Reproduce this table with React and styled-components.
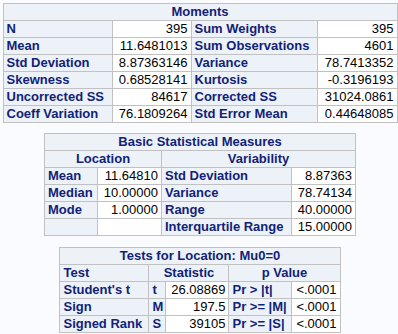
import { createGlobalStyle, styled } from "styled-components";

const GlobalStyle = createGlobalStyle`
  html, body {
    margin: 0;
    padding: 0;
    background: #fafbfe;
  }
  body {
    font-family: "Liberation Sans", Arial, sans-serif;
    font-size: 13px;
  }
`;

const Page = styled.div`
  width: 398px;
  box-sizing: border-box;
  padding: 3px 0 0 2px;
  display: flex;
  flex-direction: column;
  align-items: center;
`;

const Table = styled.table`
  border-collapse: collapse;
  table-layout: fixed;
  margin-bottom: ${(p) => p.$gap || 0}px;
  td, th {
    font-family: "Liberation Sans", Arial, sans-serif;
    font-size: 13px;
    line-height: 14px;
    border: 1px solid #c1c1c1;
    padding: 1px 3px;
    white-space: nowrap;
    overflow: hidden;
  }
`;

const Head = styled.th`
  background: #edf2f9;
  color: #112277;
  font-weight: bold;
  text-align: ${(p) => p.$align || "left"};
`;

const Cell = styled.td`
  background: #fff;
  color: #000;
  text-align: right;
`;

const moments = [
  ["N", "395", "Sum Weights", "395"],
  ["Mean", "11.6481013", "Sum Observations", "4601"],
  ["Std Deviation", "8.87363146", "Variance", "78.7413352"],
  ["Skewness", "0.68528141", "Kurtosis", "-0.3196193"],
  ["Uncorrected SS", "84617", "Corrected SS", "31024.0861"],
  ["Coeff Variation", "76.1809264", "Std Error Mean", "0.44648085"],
];

const basic = [
  ["Mean", "11.64810", "Std Deviation", "8.87363"],
  ["Median", "10.00000", "Variance", "78.74134"],
  ["Mode", "1.00000", "Range", "40.00000"],
  ["", "", "Interquartile Range", "15.00000"],
];

const tests = [
  ["Student's t", "t", "26.08869", "Pr > |t|", "<.0001"],
  ["Sign", "M", "197.5", "Pr >= |M|", "<.0001"],
  ["Signed Rank", "S", "39105", "Pr >= |S|", "<.0001"],
];

function Cols({ widths }) {
  return (
    <colgroup>
      {widths.map((w, i) => (
        <col key={i} style={{ width: w }} />
      ))}
    </colgroup>
  );
}

export default function App() {
  return (
    <Page>
      <GlobalStyle />
      <Table $gap={10} style={{ width: 394 }}>
        <Cols widths={[109, 79, 126, 80]} />
        <thead>
          <tr>
            <Head colSpan={4} $align="center">Moments</Head>
          </tr>
        </thead>
        <tbody>
          {moments.map((r) => (
            <tr key={r[0]}>
              <Head>{r[0]}</Head>
              <Cell>{r[1]}</Cell>
              <Head>{r[2]}</Head>
              <Cell>{r[3]}</Cell>
            </tr>
          ))}
        </tbody>
      </Table>

      <Table $gap={11} style={{ width: 311 }}>
        <Cols widths={[53, 64, 130, 64]} />
        <thead>
          <tr>
            <Head colSpan={4} $align="center">Basic Statistical Measures</Head>
          </tr>
          <tr>
            <Head colSpan={2} $align="center">Location</Head>
            <Head colSpan={2} $align="center">Variability</Head>
          </tr>
        </thead>
        <tbody>
          {basic.map((r) => (
            <tr key={r[2]}>
              <Head>{r[0]}</Head>
              <Cell>{r[1]}</Cell>
              <Head>{r[2]}</Head>
              <Cell>{r[3]}</Cell>
            </tr>
          ))}
        </tbody>
      </Table>

      <Table style={{ width: 280 }}>
        <Cols widths={[89, 17, 63, 63, 48]} />
        <thead>
          <tr>
            <Head colSpan={5} $align="center">Tests for Location: Mu0=0</Head>
          </tr>
          <tr>
            <Head>Test</Head>
            <Head colSpan={2} $align="center">Statistic</Head>
            <Head colSpan={2} $align="center">p Value</Head>
          </tr>
        </thead>
        <tbody>
          {tests.map((r) => (
            <tr key={r[0]}>
              <Head>{r[0]}</Head>
              <Head>{r[1]}</Head>
              <Cell>{r[2]}</Cell>
              <Head>{r[3]}</Head>
              <Cell>{r[4]}</Cell>
            </tr>
          ))}
        </tbody>
      </Table>
    </Page>
  );
}
